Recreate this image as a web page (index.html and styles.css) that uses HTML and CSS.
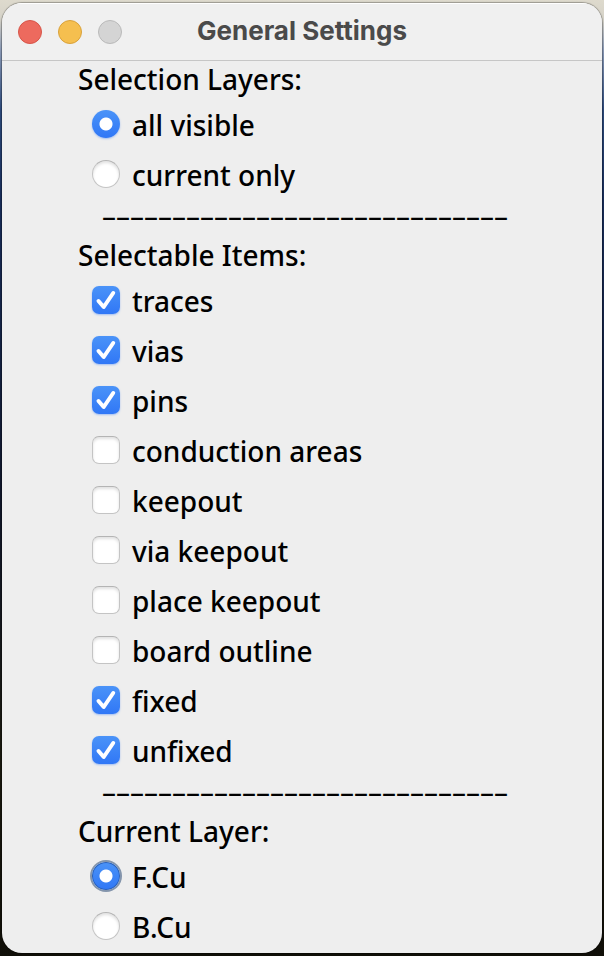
FILE: index.html
```html
<!DOCTYPE html>
<html lang="en">
<head>
<meta charset="utf-8">
<title>General Settings</title>
<link rel="stylesheet" href="styles.css">
</head>
<body>
<main class="window">
  <header class="titlebar">
    <div class="lights">
      <button class="light close" aria-label="Close"></button>
      <button class="light minimize" aria-label="Minimize"></button>
      <button class="light zoom" aria-label="Zoom" disabled></button>
    </div>
    <h1 class="title">General Settings</h1>
  </header>
  <form class="content">
    <h2 class="heading">Selection Layers:</h2>
    <label class="row"><input type="radio" name="selection" checked><span class="text">all visible</span></label>
    <label class="row"><input type="radio" name="selection"><span class="text">current only</span></label>
    <p class="separator">–––––––––––––––––––––––––––––</p>
    <h2 class="heading">Selectable Items:</h2>
    <label class="row"><input type="checkbox" checked><span class="text">traces</span></label>
    <label class="row"><input type="checkbox" checked><span class="text">vias</span></label>
    <label class="row"><input type="checkbox" checked><span class="text">pins</span></label>
    <label class="row"><input type="checkbox"><span class="text">conduction areas</span></label>
    <label class="row"><input type="checkbox"><span class="text">keepout</span></label>
    <label class="row"><input type="checkbox"><span class="text">via keepout</span></label>
    <label class="row"><input type="checkbox"><span class="text">place keepout</span></label>
    <label class="row"><input type="checkbox"><span class="text">board outline</span></label>
    <label class="row"><input type="checkbox" checked><span class="text">fixed</span></label>
    <label class="row"><input type="checkbox" checked><span class="text">unfixed</span></label>
    <p class="separator">–––––––––––––––––––––––––––––</p>
    <h2 class="heading">Current Layer:</h2>
    <label class="row"><input class="focused" type="radio" name="layer" checked><span class="text">F.Cu</span></label>
    <label class="row"><input type="radio" name="layer"><span class="text">B.Cu</span></label>
  </form>
</main>
</body>
</html>
```

FILE: styles.css
```css
* {
  box-sizing: border-box;
}

body {
  margin: 0;
  padding: 3px 2px;
  background: linear-gradient(#dedacd 0, #d5d2c8 20px, #8b9bb8 50px, #2d4a7c 110px, #182d5a 200px, #10162a 500px, #1a190f 750px, #100f08 100%);
  font-family: "Noto Sans", "Open Sans", sans-serif;
  font-size: 28px;
  font-weight: 500;
  line-height: 36px;
  color: #000;
}

.window {
  overflow: hidden;
  padding-bottom: 2px;
  border-radius: 20px;
  background: #eee;
  box-shadow: 0 0 1px 1px rgba(0, 0, 0, 0.3);
}

.titlebar {
  display: grid;
  grid-template-columns: 1fr auto 1fr;
  align-items: center;
  height: 58px;
  padding: 0 16px;
  background: #f0f0f0;
  border-bottom: 1px solid #c6c6c6;
  box-shadow: inset 0 1px #fff;
}

.lights {
  display: flex;
  gap: 16px;
}

.light {
  width: 24px;
  height: 24px;
  padding: 0;
  border: 1px solid;
  border-radius: 50%;
}

.close {
  background: #ed6a5e;
  border-color: #d65549;
}

.minimize {
  background: #f5bf4f;
  border-color: #d8a13b;
}

.zoom {
  background: #d4d4d4;
  border-color: #b9b9b9;
}

.title {
  margin: 0;
  padding-bottom: 2px;
  font-family: Inter, sans-serif;
  font-size: 26px;
  font-weight: 700;
  color: #4a4a4a;
}

.content {
  padding: 0 76px;
}

.heading {
  margin: 0;
  padding-bottom: 2px;
  font-size: 28px;
  font-weight: 500;
}

.row {
  display: flex;
  align-items: center;
  gap: 12px;
  height: 50px;
  padding-left: 14px;
}

.text {
  padding-top: 2px;
}

.separator {
  margin: 0;
  padding: 0 0 6px 24px;
  font-weight: 400;
  line-height: 32px;
  white-space: nowrap;
}

input {
  appearance: none;
  flex: none;
  width: 28px;
  height: 28px;
  margin: 0;
  border: 1px solid #c4c4c4;
  border-top-color: #b4b4b4;
  background: #fff;
  box-shadow: inset 0 2px 3px rgba(0, 0, 0, 0.12);
}

input[type="radio"] {
  border-radius: 50%;
}

input[type="checkbox"] {
  border-radius: 7px;
}

input:checked {
  border: 0;
  box-shadow: 0 1px 2px rgba(50, 120, 247, 0.4);
}

input[type="radio"]:checked {
  background: radial-gradient(circle, #fff 6px, transparent 7px), linear-gradient(#4a93f8, #3077f6);
}

input[type="checkbox"]:checked {
  background: url('data:image/svg+xml,<svg xmlns="http://www.w3.org/2000/svg" viewBox="0 0 28 28"><path d="M6.5 15L11.7 21L21.2 7" fill="none" stroke="white" stroke-width="4" stroke-linecap="round" stroke-linejoin="round"/></svg>'), linear-gradient(#4a93f8, #3077f6);
}

input.focused:checked {
  box-shadow: inset 0 0 0 1px #285fb8, 0 0 0 2px #8495ac;
}
```
